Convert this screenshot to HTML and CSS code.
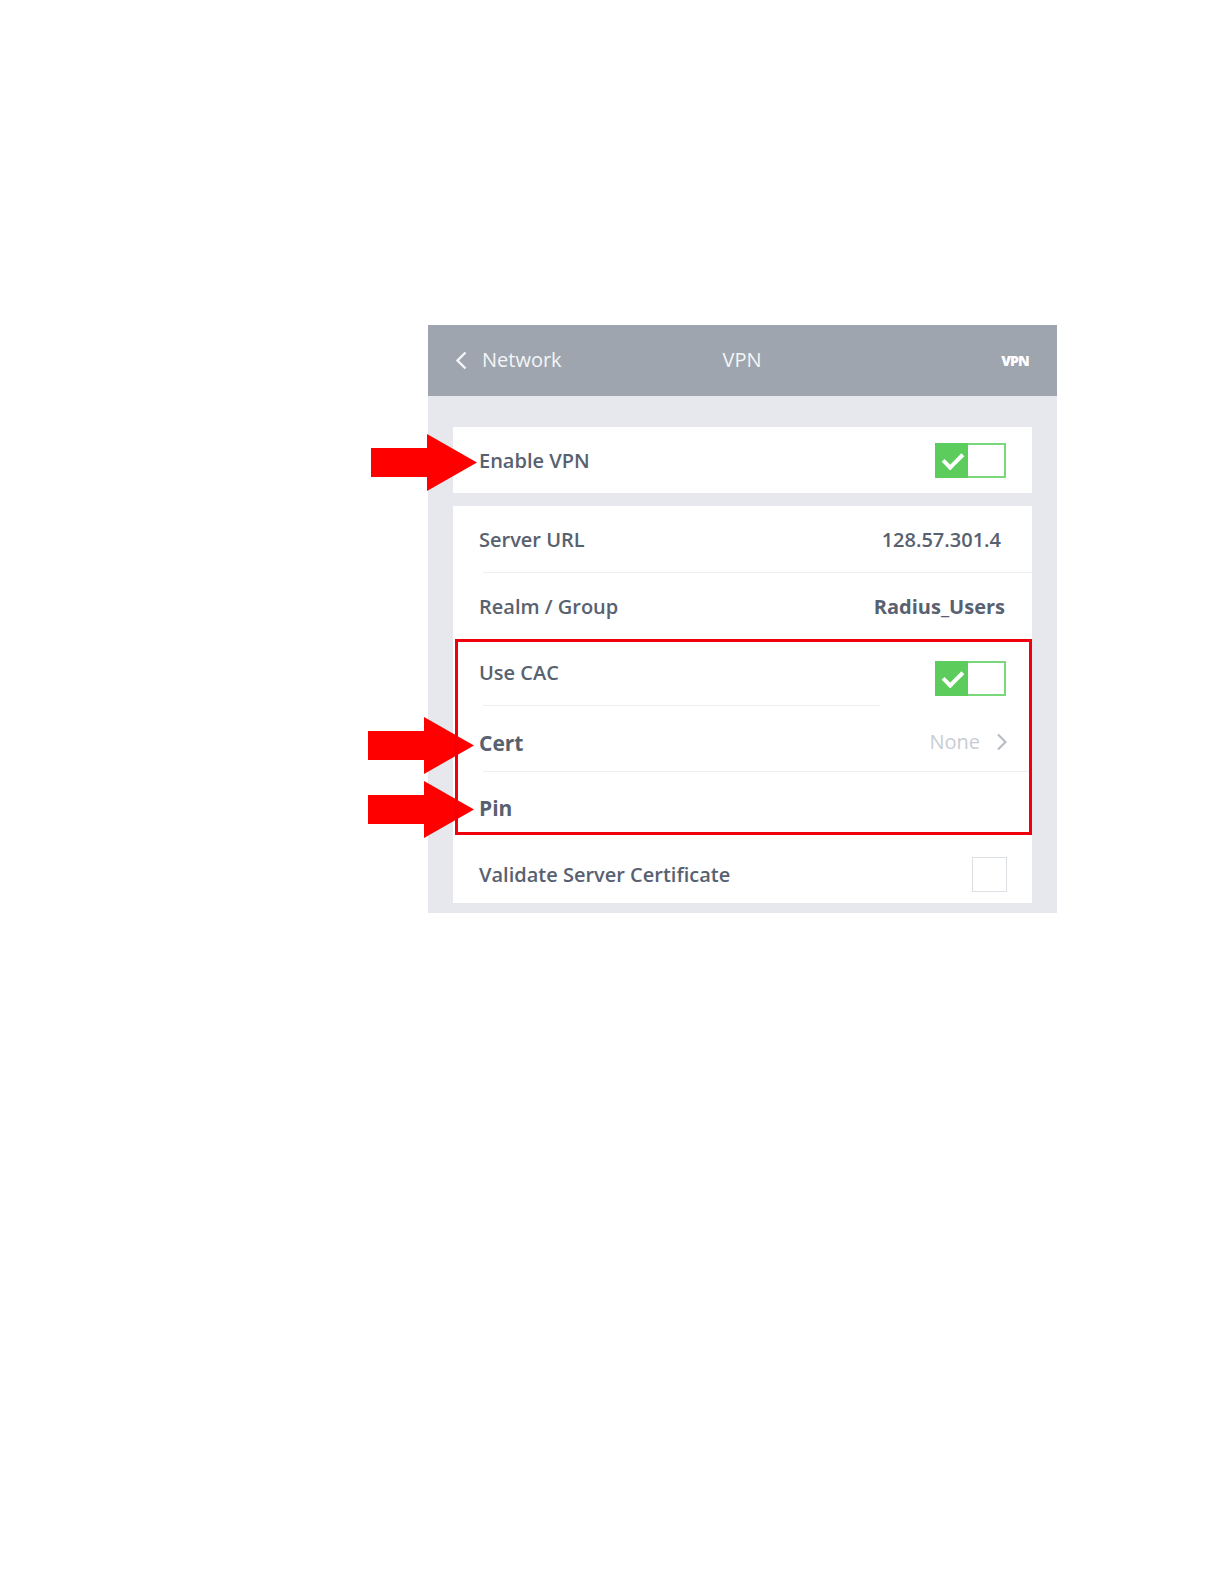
FILE: index.html
```html
<!DOCTYPE html>
<html lang="en">
<head>
  <meta charset="UTF-8">
  <meta name="viewport" content="width=device-width, initial-scale=1.0">
  <title>VPN Settings</title>
  <link rel="stylesheet" href="styles.css">
</head>
<body>
  <div class="page">
    <div class="panel">
      <div class="topbar">
        <div class="back">
          <svg class="back-icon" width="13" height="19" viewBox="0 0 13 19">
            <path d="M10.5 1.5 L2.5 9.5 L10.5 17.5" fill="none" stroke="#f4f5f7" stroke-width="2.4"/>
          </svg>
          <span>Network</span>
        </div>
        <div class="title">VPN</div>
        <div class="badge">VPN</div>
      </div>

      <div class="card first">
        <div class="row">
          <svg class="arrow" width="106" height="57" viewBox="0 0 106 57">
            <polygon points="0,14 56,14 56,0 106,28.5 56,57 56,43 0,43" fill="#ff0000"/>
          </svg>
          <span class="label">Enable VPN</span>
          <div class="toggle on"><span class="knob"></span></div>
        </div>
      </div>

      <div class="card">
        <div class="row line">
          <span class="label">Server URL</span>
          <span class="value">128.57.301.4</span>
        </div>
        <div class="row">
          <span class="label">Realm / Group</span>
          <span class="value wide">Radius_Users</span>
        </div>

        <div class="highlight">
          <div class="row line short">
            <span class="label">Use CAC</span>
            <div class="toggle on low"><span class="knob"></span></div>
          </div>
          <div class="row line cert">
            <svg class="arrow" width="106" height="57" viewBox="0 0 106 57">
              <polygon points="0,14 56,14 56,0 106,28.5 56,57 56,43 0,43" fill="#ff0000"/>
            </svg>
            <span class="label big">Cert</span>
            <span class="muted">None
              <svg class="chev" width="12" height="18" viewBox="0 0 12 18">
                <path d="M2 1.5 L9.5 9 L2 16.5" fill="none" stroke="#b9bdc4" stroke-width="2.2"/>
              </svg>
            </span>
          </div>
          <div class="row pin">
            <svg class="arrow" width="106" height="57" viewBox="0 0 106 57">
              <polygon points="0,14 56,14 56,0 106,28.5 56,57 56,43 0,43" fill="#ff0000"/>
            </svg>
            <span class="label big">Pin</span>
          </div>
        </div>

        <div class="row last">
          <span class="label low">Validate Server Certificate</span>
          <div class="checkbox"></div>
        </div>
      </div>
    </div>
  </div>
</body>
</html>
```

FILE: styles.css
```css
body {
  margin: 0;
  background-color: #fff;
  font-family: "Open Sans", "Liberation Sans", sans-serif;
}

.page {
  width: 1224px;
  height: 1584px;
  padding: 325px 0 0 428px;
  box-sizing: border-box;
}

.panel {
  width: 629px;
  background-color: #e6e8ed;
  padding-bottom: 10px;
}

.topbar {
  height: 71px;
  background-color: #9ea5ae;
  display: grid;
  grid-template-columns: 1fr auto 1fr;
  align-items: center;
  padding: 0 28px 0 27px;
  color: #f4f5f7;
  font-size: 20px;
}

.back {
  display: flex;
  align-items: center;
  gap: 14px;
}

.back span {
  margin-top: -2px;
}

.title {
  margin-top: -2px;
}

.badge {
  justify-self: end;
  font-size: 14px;
  font-weight: 800;
  letter-spacing: -0.8px;
  color: #fff;
}

.card {
  background-color: #fff;
  margin: 13px 25px 0;
}

.card.first {
  margin-top: 31px;
}

.row {
  position: relative;
  height: 66px;
  display: flex;
  align-items: center;
  justify-content: space-between;
  padding: 0 26px 0 26px;
  color: #586170;
}

.row.line::after {
  content: "";
  position: absolute;
  left: 30px;
  right: 0;
  bottom: -1px;
  height: 1px;
  background-color: #eceef1;
}

.row.line {
  margin-bottom: 1px;
}

.row.short::after {
  right: 152px;
}

.row.cert {
  height: 65px;
}

.row.pin {
  height: 63px;
}

.row.last {
  height: 68px;
}

.label {
  font-size: 20px;
  font-weight: 600;
}

.label.big {
  font-size: 21px;
  font-weight: 700;
  margin-top: 8px;
}

.label.low {
  margin-top: 11px;
}

.value {
  font-size: 20px;
  font-weight: 600;
  margin-right: 5px;
}

.value.wide {
  font-weight: 700;
  margin-right: 1px;
}

.muted {
  display: flex;
  align-items: center;
  gap: 16px;
  font-size: 20px;
  color: #c9cdd3;
  margin-right: -2px;
  margin-top: 6px;
}

.toggle {
  width: 71px;
  height: 35px;
  box-sizing: border-box;
  border: 2px solid #79d879;
  background-color: #fff;
  display: flex;
}

.toggle.low {
  margin-top: 12px;
}

.toggle.on .knob {
  width: 33px;
  margin: -2px 0 0 -2px;
  height: 35px;
  background-color: #5ccc5c;
  position: relative;
}

.toggle.on .knob::after {
  content: "";
  position: absolute;
  left: 12px;
  top: 6px;
  width: 8px;
  height: 16px;
  border-right: 4px solid #fff;
  border-bottom: 4px solid #fff;
  transform: rotate(45deg);
}

.checkbox {
  width: 35px;
  height: 35px;
  box-sizing: border-box;
  border: 1px solid #dcdfe4;
  margin-right: -1px;
  margin-top: 11px;
}

.highlight {
  position: relative;
}

.highlight::after {
  content: "";
  position: absolute;
  left: 2px;
  right: 0;
  top: 0;
  bottom: 0;
  border: 3px solid #f0000b;
  pointer-events: none;
}

.arrow {
  position: absolute;
  left: -82px;
  top: 50%;
  margin-top: -26px;
}

.cert .arrow {
  left: -85px;
  margin-top: -22px;
}

.pin .arrow {
  left: -85px;
  margin-top: -23px;
}
```
